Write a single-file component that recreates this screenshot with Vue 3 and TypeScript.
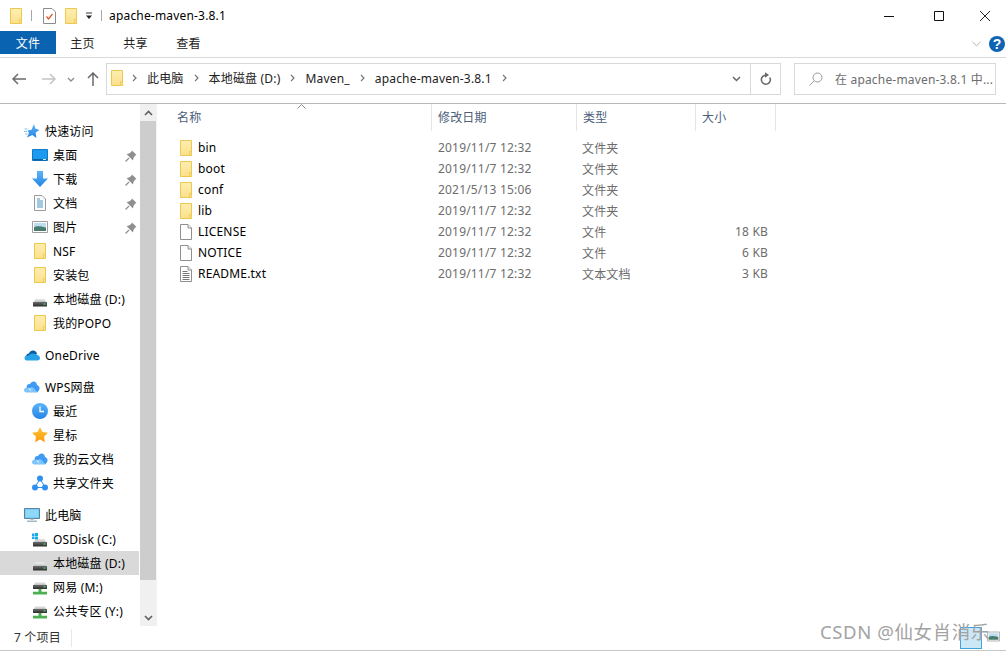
<script setup lang="ts">
interface NavItem { label: string; icon: string; top?: boolean; pin?: boolean; selected?: boolean; gap?: boolean }
interface FileItem { name: string; date: string; type: string; size: string; icon: string }

const navItems: NavItem[] = [
  { label: '快速访问', icon: 'quick', top: true },
  { label: '桌面', icon: 'desktop', pin: true },
  { label: '下载', icon: 'download', pin: true },
  { label: '文档', icon: 'docs', pin: true },
  { label: '图片', icon: 'pics', pin: true },
  { label: 'NSF', icon: 'folder' },
  { label: '安装包', icon: 'folder' },
  { label: '本地磁盘 (D:)', icon: 'drive' },
  { label: '我的POPO', icon: 'folder' },
  { label: 'OneDrive', icon: 'onedrive', top: true, gap: true },
  { label: 'WPS网盘', icon: 'wps', top: true, gap: true },
  { label: '最近', icon: 'clock' },
  { label: '星标', icon: 'star' },
  { label: '我的云文档', icon: 'wps' },
  { label: '共享文件夹', icon: 'share' },
  { label: '此电脑', icon: 'pc', top: true, gap: true },
  { label: 'OSDisk (C:)', icon: 'osdisk' },
  { label: '本地磁盘 (D:)', icon: 'drive', selected: true },
  { label: '网易 (M:)', icon: 'netdrive' },
  { label: '公共专区 (Y:)', icon: 'netdrive' },
]

const files: FileItem[] = [
  { name: 'bin', date: '2019/11/7 12:32', type: '文件夹', size: '', icon: 'folder' },
  { name: 'boot', date: '2019/11/7 12:32', type: '文件夹', size: '', icon: 'folder' },
  { name: 'conf', date: '2021/5/13 15:06', type: '文件夹', size: '', icon: 'folder' },
  { name: 'lib', date: '2019/11/7 12:32', type: '文件夹', size: '', icon: 'folder' },
  { name: 'LICENSE', date: '2019/11/7 12:32', type: '文件', size: '18 KB', icon: 'blank' },
  { name: 'NOTICE', date: '2019/11/7 12:32', type: '文件', size: '6 KB', icon: 'blank' },
  { name: 'README.txt', date: '2019/11/7 12:32', type: '文本文档', size: '3 KB', icon: 'text' },
]

const crumbs = ['此电脑', '本地磁盘 (D:)', 'Maven_', 'apache-maven-3.8.1']
const tabs = ['主页', '共享', '查看']
const columns = ['名称', '修改日期', '类型', '大小']
</script>

<template>
  <div class="win">
    <svg class="defs" width="0" height="0" aria-hidden="true">
      <defs>
        <linearGradient id="fg" x1="0" y1="0" x2="0" y2="1"><stop offset="0" stop-color="#fdeeb0" /><stop offset="1" stop-color="#fbe08c" /></linearGradient>
        <linearGradient id="bl" x1="0" y1="0" x2="0" y2="1"><stop offset="0" stop-color="#5cb6f7" /><stop offset="1" stop-color="#2383e6" /></linearGradient>
        <linearGradient id="gold" x1="0" y1="0" x2="0" y2="1"><stop offset="0" stop-color="#ffc52e" /><stop offset="1" stop-color="#fb9a10" /></linearGradient>
        <linearGradient id="drv" x1="0" y1="0" x2="0" y2="1"><stop offset="0" stop-color="#f4f4f4" /><stop offset="1" stop-color="#bdbdbd" /></linearGradient>
        <linearGradient id="drk" x1="0" y1="0" x2="0" y2="1"><stop offset="0" stop-color="#6a6a6a" /><stop offset="1" stop-color="#2c2c2c" /></linearGradient>
      </defs>
      <symbol id="folder" viewBox="0 0 16 16">
        <path d="M2.500.5h11v15h-11z" fill="url(#fg)" stroke="#edc84f" />
        <path d="M11.500 11.500h2v4h-2z" fill="#fbe08c" stroke="#edc84f" stroke-width=".8" />
      </symbol>
      <symbol id="blank" viewBox="0 0 16 16">
        <path d="M2.500.5h7.500l3.500 3.500v11.500h-11z" fill="#fff" stroke="#8f8f8f" />
        <path d="M10 .5v3.500h3.500" fill="#eee" stroke="#8f8f8f" />
      </symbol>
      <symbol id="text" viewBox="0 0 16 16">
        <path d="M2.500.5h7.500l3.500 3.500v11.500h-11z" fill="#fff" stroke="#8f8f8f" />
        <path d="M10 .5v3.500h3.500" fill="#eee" stroke="#8f8f8f" />
        <path d="M4.500 5.500h5M4.500 7.500h7M4.500 9.500h7M4.500 11.500h7M4.500 13.500h7" stroke="#777" fill="none" />
      </symbol>
      <symbol id="quick" viewBox="0 0 16 16">
        <path d="M10 1l1.300 4.600L15.500 7l-3.800 2.600.6 5.400L8.300 12 3 14.500l2-4.500-1.500-2.500 4-.7z" fill="url(#bl)" />
        <path d="M.5 6h3M0 8.500h3M1 11h2.500" stroke="#7cc0f5" fill="none" />
      </symbol>
      <symbol id="desktop" viewBox="0 0 16 16">
        <path d="M.5 2.500h15v11H.5z" fill="#1c9aef" stroke="#0d7cc8" />
        <path d="M1 12h14v1.500H1z" fill="#0a5f9e" />
        <path d="M11 12.500h3" stroke="#cfe9fb" fill="none" />
      </symbol>
      <symbol id="download" viewBox="0 0 16 16">
        <path d="M5 0h6v7.500h5L8 16 0 7.500h5z" fill="url(#bl)" />
      </symbol>
      <symbol id="docs" viewBox="0 0 16 16">
        <path d="M2.500.5h7.500l3.500 3.500v11.500h-11z" fill="#fbfbfb" stroke="#9b9b9b" />
        <path d="M5 4h3M5 6h6M5 8h6M5 10h6M5 12h6" stroke="#4f97c9" fill="none" />
      </symbol>
      <symbol id="pics" viewBox="0 0 16 16">
        <path d="M.5 2.500h15v11H.5z" fill="#fff" stroke="#9f9f9f" />
        <path d="M2 4h12v4.500H2z" fill="#bcdcf0" />
        <path d="M2 8.500c3-2 6-1 12 0v3.500H2z" fill="#4a7c6e" />
      </symbol>
      <symbol id="drive" viewBox="0 0 16 16">
        <path d="M2 11l1.500-3.500h9L14 11z" fill="url(#drv)" />
        <path d="M1 11h14v4.500H1z" fill="url(#drk)" />
        <path d="M11.500 12.500h2v1.200h-2z" fill="#44d862" />
      </symbol>
      <symbol id="osdisk" viewBox="0 0 16 16">
        <path d="M2 11l1.500-3.500h9L14 11z" fill="url(#drv)" />
        <path d="M1 11h14v4.500H1z" fill="url(#drk)" />
        <path d="M11.500 12.500h2v1.200h-2z" fill="#44d862" />
        <path d="M0 2.500h2.500V5H0zM3 2h3v3H3zM0 5.500h2.500V8H0zM3 5.500h3v3H3z" fill="#19a9ef" />
      </symbol>
      <symbol id="netdrive" viewBox="0 0 16 16">
        <path d="M2 6l1-3h10l1 3z" fill="url(#drv)" />
        <path d="M1 6h14v4H1z" fill="url(#drk)" />
        <path d="M11.500 7.300h2v1.200h-2z" fill="#44d862" />
        <path d="M6.500 10h3v2.800h-3zM1 12.800h14V15.500H1z" fill="#4caf50" />
      </symbol>
      <symbol id="onedrive" viewBox="0 0 16 16">
        <path d="M2 9.500C2 7.500 3.500 6.500 5 6.500 6 3.500 10 2 12.500 5.500L13 7 6 12 2 11z" fill="#0a5ea8" />
        <path d="M.5 11C.5 9.500 2 8.500 3.500 9 5 8 6.500 6.500 9 6.500 11 6.500 12 7.500 13 8 14.500 8 16 9.500 16 11 16 12.500 15 13.500 13.500 13.500H2.500C1.500 13.500.5 12.500.5 11z" fill="#28a2e6" />
      </symbol>
      <symbol id="wps" viewBox="0 0 16 16">
        <path d="M3 9C2 6 4 4.500 6 5 7.500 1.500 12.500 1.500 13 6 15.500 6.500 16.500 10 14.500 12L13 13.500 8 8.500 5 9.500z" fill="#3d9bf3" />
        <path d="M0 11C0 9 2.500 8 4 9L8 13.500H2C1 13.500 0 12.500 0 11z" fill="#7cc4fb" />
        <path d="M6 9.500C7 8 9 8 10 9.500L13.500 13.500H7.500z" fill="#7cc4fb" />
      </symbol>
      <symbol id="clock" viewBox="0 0 16 16">
        <circle cx="8" cy="8" r="8" fill="url(#bl)" />
        <path d="M8 3.500V8.500h4" stroke="#fff" stroke-width="1.300" fill="none" />
      </symbol>
      <symbol id="star" viewBox="0 0 16 16">
        <path d="M8 0l2.400 5 5.600.8-4 3.900.9 5.500L8 12.600l-4.900 2.600.9-5.500-4-3.900L5.600 5z" fill="url(#gold)" />
      </symbol>
      <symbol id="share" viewBox="0 0 16 16">
        <path d="M8 4L3 12M8 4l5 8M3 12.500h10" stroke="#2f8ff0" fill="none" />
        <circle cx="8" cy="3.500" r="3" fill="#2f8ff0" />
        <circle cx="3" cy="12.500" r="3" fill="#2f8ff0" />
        <circle cx="13" cy="12.500" r="3" fill="#2f8ff0" />
      </symbol>
      <symbol id="pc" viewBox="0 0 16 16">
        <path d="M.5 1.500h15v10H.5z" fill="#73cdf7" stroke="#5f7f9a" />
        <path d="M2 3h12v7H2z" fill="#8ed8fa" />
        <path d="M6.500 11.500h3V13h-3zM3 13.500h10v1.500H3z" fill="#a3b7c7" />
      </symbol>
      <symbol id="pin" viewBox="0 0 12 12">
        <path d="M7 .5l4.500 4.500-1.500.7L8.500 8 8 10.500 1.500 4l2.500-.5 2.200-1.500z" fill="#8f8f8f" />
        <path d="M4 8L.5 11.500" stroke="#8f8f8f" stroke-width="1.200" fill="none" />
      </symbol>
    </svg>

    <header class="title-bar">
      <svg class="qat-folder"><use href="#folder" /></svg>
      <span class="qat-sep"></span>
      <svg class="qat-doc" viewBox="0 0 13 16">
        <path d="M.5.500h8.500l3.500 3.500v11.500H.5z" fill="#fff" stroke="#8c8c8c" />
        <path d="M3.500 8.500l2 2.500 4-5" stroke="#e2592a" stroke-width="1.300" fill="none" />
      </svg>
      <svg class="qat-folder2"><use href="#folder" /></svg>
      <svg class="qat-drop" viewBox="0 0 8 8">
        <path d="M1 1h6" stroke="#333" fill="none" />
        <path d="M1 3.500h6L4 7z" fill="#222" />
      </svg>
      <span class="qat-sep second"></span>
      <span class="win-title">apache-maven-3.8.1</span>
      <div class="win-controls">
        <svg class="ctl-min" viewBox="0 0 10 10"><path d="M0 5.500h10" stroke="#111" fill="none" /></svg>
        <svg class="ctl-max" viewBox="0 0 10 10"><path d="M.5.500h9v9h-9z" stroke="#111" fill="none" /></svg>
        <svg class="ctl-close" viewBox="0 0 10 10"><path d="M0 0l10 10M10 0L0 10" stroke="#111" stroke-width=".9" fill="none" /></svg>
      </div>
    </header>

    <nav class="ribbon">
      <div class="tab-file">文件</div>
      <div v-for="t in tabs" :key="t" class="tab">{{ t }}</div>
      <div class="ribbon-right">
        <svg class="rib-chev" viewBox="0 0 10 6"><path d="M.5.500L5 5 9.500.5" stroke="#aaa" fill="none" /></svg>
        <span class="help">?</span>
      </div>
    </nav>

    <div class="address-row">
      <svg class="nav-arrow back" viewBox="0 0 14 12"><path d="M6 1L1 6l5 5M1 6h13" stroke="#6a6a6a" stroke-width="1.500" fill="none" /></svg>
      <svg class="nav-arrow forward" viewBox="0 0 14 12"><path d="M8 1l5 5-5 5M13 6H0" stroke="#c4c4c4" stroke-width="1.500" fill="none" /></svg>
      <svg class="nav-chev" viewBox="0 0 8 5"><path d="M1 1l3 3 3-3" stroke="#8a8a8a" stroke-width="1.300" fill="none" /></svg>
      <svg class="nav-arrow up" viewBox="0 0 12 14"><path d="M1 6l5-5 5 5M6 1v13" stroke="#6a6a6a" stroke-width="1.500" fill="none" /></svg>
      <div class="addr">
        <svg class="addr-folder"><use href="#folder" /></svg>
        <template v-for="c in crumbs" :key="c">
          <svg class="crumb-sep" viewBox="0 0 5 8"><path d="M1 1l3 3-3 3" stroke="#777" stroke-width="1.200" fill="none" /></svg>
          <span class="crumb">{{ c }}</span>
        </template>
        <svg class="crumb-sep last" viewBox="0 0 5 8"><path d="M1 1l3 3-3 3" stroke="#777" stroke-width="1.200" fill="none" /></svg>
        <svg class="addr-chev" viewBox="0 0 9 6"><path d="M1 1l3.500 3.500L8 1" stroke="#666" stroke-width="1.500" fill="none" /></svg>
        <span class="addr-refresh">
          <svg viewBox="0 0 12 14"><path d="M9.800 5.500A4.500 4.500 0 1 1 5.500 3.200" stroke="#666" stroke-width="1.500" fill="none" /><path d="M5 .3v5.500L9 3z" fill="#666" /></svg>
        </span>
      </div>
      <div class="search">
        <svg class="search-icon" viewBox="0 0 14 14"><circle cx="8.500" cy="5.500" r="4.500" stroke="#999" fill="none" /><path d="M5 9l-4.500 4.500" stroke="#999" fill="none" /></svg>
        <span class="search-text">在 apache-maven-3.8.1 中...</span>
      </div>
    </div>

    <main class="body">
      <aside class="side">
        <ul class="tree">
          <li v-for="(n, i) in navItems" :key="i" class="node" :class="{ top: n.top, gap: n.gap, selected: n.selected }">
            <svg class="node-icon"><use :href="'#' + n.icon" /></svg>
            <span class="node-label">{{ n.label }}</span>
            <svg v-if="n.pin" class="pin"><use href="#pin" /></svg>
          </li>
        </ul>
        <div class="scrollbar">
          <div class="sb-btn"><svg viewBox="0 0 9 6"><path d="M1 5l3.500-3.500L8 5" stroke="#606060" stroke-width="1.600" fill="none" /></svg></div>
          <div class="sb-track"><div class="sb-thumb"></div></div>
          <div class="sb-btn"><svg viewBox="0 0 9 6"><path d="M1 1l3.500 3.500L8 1" stroke="#606060" stroke-width="1.600" fill="none" /></svg></div>
        </div>
      </aside>
      <section class="pane">
        <div class="head">
          <div v-for="c in columns" :key="c" class="head-cell">{{ c }}</div>
          <svg class="sort" viewBox="0 0 9 5"><path d="M.5 4.500L4.500.5l4 4" stroke="#8a8a8a" fill="none" /></svg>
        </div>
        <div class="rows">
          <div v-for="f in files" :key="f.name" class="row">
            <div class="cell-name"><svg class="file-icon"><use :href="'#' + f.icon" /></svg>{{ f.name }}</div>
            <div class="cell-date">{{ f.date }}</div>
            <div class="cell-type">{{ f.type }}</div>
            <div class="cell-size">{{ f.size }}</div>
          </div>
        </div>
      </section>
    </main>

    <footer class="status"><span class="count">7 个项目</span></footer>

    <div class="view-btn"></div>
    <svg class="view-thumb"><use href="#pics" /></svg>
    <div class="watermark">CSDN @仙女肖消乐</div>
  </div>
</template>

<style>
html, body { margin: 0; background: #fff; }
</style>

<style scoped>
.win {
  position: relative;
  width: 1006px;
  height: 651px;
  overflow: hidden;
  background: #fff;
  display: flex;
  flex-direction: column;
  font-family: "Noto Sans", "Noto Sans CJK SC", sans-serif;
  font-size: 12px;
  letter-spacing: .18px;
  color: #000;
  box-sizing: border-box;
  border-bottom: 1px solid #c8c8c8;
}
.defs { display: block; flex: none; }
svg { display: block; flex: none; }

.title-bar { height: 31px; flex: none; display: flex; align-items: center; padding-left: 10px; }
.qat-folder { width: 16px; height: 16px; margin-left: -2px; }
.qat-sep { width: 1px; height: 11px; background: #a8a8a8; margin-left: 7px; }
.qat-sep.second { margin-left: 8px; }
.qat-doc { width: 13px; height: 16px; margin-left: 11px; }
.qat-folder2 { width: 16px; height: 16px; margin-left: 7px; }
.qat-drop { width: 8px; height: 8px; margin-left: 6px; }
.win-title { margin-left: 7px; }
.win-controls { margin-left: auto; display: flex; align-items: center; }
.ctl-min { width: 10px; height: 10px; margin-right: 40px; }
.ctl-max { width: 10px; height: 10px; margin-right: 36px; }
.ctl-close { width: 10px; height: 10px; margin-right: 16px; }

.ribbon { height: 27px; flex: none; display: flex; align-items: flex-start; border-bottom: 1px solid #dadada; box-sizing: border-box; }
.tab-file { width: 56px; height: 23px; background: #0a63b0; color: #fff; display: flex; align-items: center; justify-content: center; }
.tab { width: 53px; height: 23px; display: flex; align-items: center; justify-content: center; color: #222; }
.ribbon-right { margin-left: auto; display: flex; align-items: center; height: 26px; padding-right: 1px; }
.rib-chev { width: 9px; height: 6px; margin-right: 8px; }
.help { width: 16px; height: 16px; border-radius: 50%; background: #0f64b4; color: #fff; font-family: "Liberation Sans", sans-serif; font-weight: 700; font-size: 14px; line-height: 16px; text-align: center; }

.address-row { height: 46px; flex: none; display: flex; align-items: center; border-bottom: 1px solid #b8b8b8; box-sizing: border-box; padding-bottom: 3px; }
.nav-arrow { width: 14px; height: 12px; }
.nav-arrow.back { margin-left: 12px; }
.nav-arrow.forward { margin-left: 16px; }
.nav-chev { width: 8px; height: 5px; margin-left: 11px; }
.nav-arrow.up { width: 12px; height: 14px; margin-left: 12px; }
.addr { width: 675px; height: 32px; margin-left: 7px; border: 1px solid #d9d9d9; box-sizing: border-box; display: flex; align-items: center; padding-left: 2px; color: #222; }
.addr-folder { width: 16px; height: 16px; margin-right: -3px; margin-bottom: 2px; }
.crumb-sep { width: 5px; height: 8px; margin: 0 10px 2px 10px; }
.crumb { white-space: nowrap; margin-bottom: 2px; }
.addr-chev { width: 9px; height: 6px; margin-left: auto; margin-right: 9px; }
.addr-refresh { width: 30px; height: 30px; border-left: 1px solid #d9d9d9; display: flex; align-items: center; justify-content: center; box-sizing: border-box; }
.addr-refresh svg { width: 12px; height: 14px; margin-left: 1px; }
.search { width: 202px; height: 32px; margin-left: 13px; border: 1px solid #d9d9d9; box-sizing: border-box; display: flex; align-items: center; color: #6d6d6d; }
.search-icon { width: 14px; height: 14px; margin-left: 14px; }
.search-text { margin-left: 12px; white-space: nowrap; }

.body { flex: 1; min-height: 0; display: flex; }
.side { width: 156px; flex: none; display: flex; border-right: 1px solid #f2f2f2; box-sizing: content-box; }
.tree { list-style: none; margin: 0; padding: 15px 0 0; flex: 1; min-width: 0; overflow: hidden; }
.node { height: 24px; display: flex; align-items: center; padding-left: 32px; position: relative; }
.node.top { padding-left: 24px; }
.node.gap { margin-top: 8px; }
.node.selected { background: #d9d9d9; }
.node-icon { width: 16px; height: 16px; }
.node-label { margin-left: 5px; white-space: nowrap; }
.pin { width: 12px; height: 12px; position: absolute; left: 125px; top: 7px; }
.scrollbar { width: 16px; flex: none; background: #f0f0f0; display: flex; flex-direction: column; margin-left: 1px; }
.sb-btn { height: 17px; flex: none; display: flex; align-items: center; justify-content: center; }
.sb-btn svg { width: 9px; height: 6px; }
.sb-track { flex: 1; min-height: 0; }
.sb-thumb { height: 459px; background: #cdcdcd; }

.pane { flex: 1; min-width: 0; padding-left: 14px; }
.head { display: grid; grid-template-columns: 261px 145px 119px 80px; height: 27px; width: 605px; position: relative; }
.head-cell { padding-left: 6px; padding-bottom: 2px; color: #4c607a; border-right: 1px solid #e5e5e5; display: flex; align-items: center; }
.sort { width: 9px; height: 5px; position: absolute; left: 126px; top: 0; }
.rows { padding-top: 6px; }
.row { display: grid; grid-template-columns: 261px 145px 119px 80px; height: 21px; width: 605px; align-items: center; }
.cell-name { display: flex; align-items: center; padding-left: 9px; }
.file-icon { width: 16px; height: 16px; margin-right: 4px; margin-left: -2px; }
.cell-date { padding-left: 6px; color: #6d6d6d; }
.cell-type { padding-left: 5px; color: #6d6d6d; }
.cell-size { text-align: right; padding-right: 8px; color: #6d6d6d; }

.status { height: 24px; flex: none; display: flex; align-items: center; }
.count { padding: 0 11px 0 14px; border-right: 1px solid #e8e8e8; color: #333; line-height: 18px; width: 46px; white-space: nowrap; }

.view-btn { position: absolute; left: 960px; top: 627px; width: 22px; height: 22px; background: #cce8f7; border: 1px solid #3ea5dc; box-sizing: border-box; }
.view-thumb { position: absolute; left: 987px; top: 630px; width: 13px; height: 13px; }
.watermark { position: absolute; left: 820px; top: 619px; font-size: 18.5px; letter-spacing: .6px; color: #a3a3a3; white-space: nowrap; line-height: 26px; }
</style>
